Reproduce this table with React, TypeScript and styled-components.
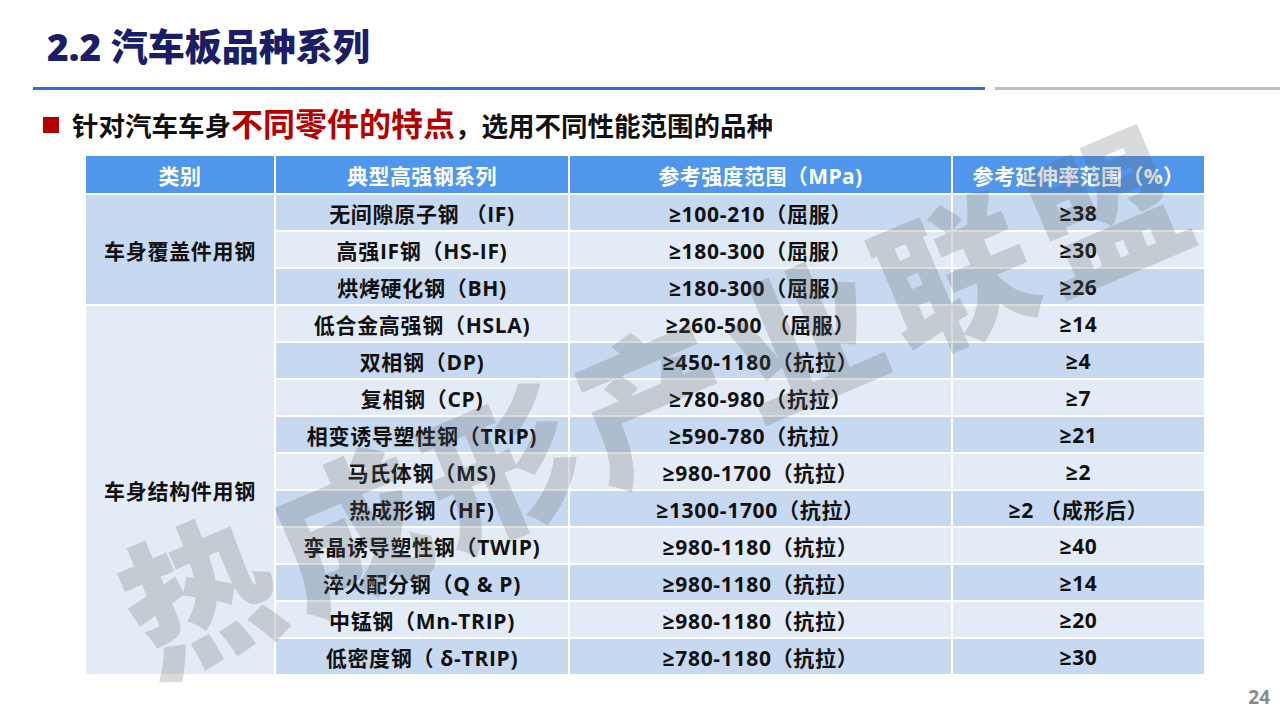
import React from "react";
import styled, { createGlobalStyle } from "styled-components";

type Row = { series: string; strength: string; elongation: string };
type Group = { name: string; tone: "dark" | "light"; rows: Row[] };

const groups: Group[] = [
  {
    name: "车身覆盖件用钢",
    tone: "dark",
    rows: [
      { series: "无间隙原子钢 （IF)", strength: "≥100-210（屈服）", elongation: "≥38" },
      { series: "高强IF钢（HS-IF)", strength: "≥180-300（屈服）", elongation: "≥30" },
      { series: "烘烤硬化钢（BH)", strength: "≥180-300（屈服）", elongation: "≥26" },
    ],
  },
  {
    name: "车身结构件用钢",
    tone: "light",
    rows: [
      { series: "低合金高强钢（HSLA)", strength: "≥260-500 （屈服）", elongation: "≥14" },
      { series: "双相钢（DP)", strength: "≥450-1180（抗拉）", elongation: "≥4" },
      { series: "复相钢（CP)", strength: "≥780-980（抗拉）", elongation: "≥7" },
      { series: "相变诱导塑性钢（TRIP)", strength: "≥590-780（抗拉）", elongation: "≥21" },
      { series: "马氏体钢（MS)", strength: "≥980-1700（抗拉）", elongation: "≥2" },
      { series: "热成形钢（HF)", strength: "≥1300-1700（抗拉）", elongation: "≥2 （成形后）" },
      { series: "孪晶诱导塑性钢（TWIP)", strength: "≥980-1180（抗拉）", elongation: "≥40" },
      { series: "淬火配分钢（Q & P)", strength: "≥980-1180（抗拉）", elongation: "≥14" },
      { series: "中锰钢（Mn-TRIP)", strength: "≥980-1180（抗拉）", elongation: "≥20" },
      { series: "低密度钢（ δ-TRIP)", strength: "≥780-1180（抗拉）", elongation: "≥30" },
    ],
  },
];

const colors = {
  navy: "#1b1e66",
  blueRule: "#2f6fd6",
  greyRule: "#b6bec6",
  red: "#b50000",
  header: "#4f96ec",
  dark: "#c6d9f0",
  light: "#e2ebf6",
};

const GlobalStyle = createGlobalStyle`
  html, body {
    margin: 0;
    padding: 0;
    background: #ffffff;
  }
  body {
    font-family: "Open Sans", "Noto Sans CJK SC", sans-serif;
  }
`;

const App = () => {
  let index = 0;
  return (
    <>
      <GlobalStyle />
      <Slide>
        <Title>2.2 汽车板品种系列</Title>
        <Rules>
          <BlueRule />
          <GreyRule />
        </Rules>
        <Bullet>
          <Square />
          <Lead>
            针对汽车车身<Highlight>不同零件的特点</Highlight>，选用不同性能范围的品种
          </Lead>
        </Bullet>
        <Table>
          <colgroup>
            <col style={{ width: 190 }} />
            <col style={{ width: 294 }} />
            <col style={{ width: 383 }} />
            <col />
          </colgroup>
          <thead>
            <tr>
              <Th>类别</Th>
              <Th>典型高强钢系列</Th>
              <Th>参考强度范围（MPa)</Th>
              <Th>参考延伸率范围（%）</Th>
            </tr>
          </thead>
          <tbody>
            {groups.map((group) =>
              group.rows.map((row, i) => {
                const tone = index++ % 2 === 0 ? "dark" : "light";
                return (
                  <tr key={row.series}>
                    {i === 0 && (
                      <Td $tone={group.tone} rowSpan={group.rows.length}>
                        {group.name}
                      </Td>
                    )}
                    <Td $tone={tone}>{row.series}</Td>
                    <Td $tone={tone}>{row.strength}</Td>
                    <Td $tone={tone}>{row.elongation}</Td>
                  </tr>
                );
              })
            )}
          </tbody>
        </Table>
        <PageNumber>24</PageNumber>
        <Watermark>热成形产业联盟</Watermark>
      </Slide>
    </>
  );
};

export default App;

const Slide = styled.div`
  position: relative;
  width: 1280px;
  height: 719px;
  overflow: hidden;
  background: #ffffff;
  display: flex;
  flex-direction: column;
`;
const Title = styled.h1`
  margin: 0;
  padding: 27px 0 0 47px;
  font-size: 37px;
  line-height: 40px;
  font-weight: 800;
  color: ${colors.navy};
`;
const Rules = styled.div`
  display: flex;
  gap: 10px;
  margin-top: 20px;
  padding-left: 33px;
`;
const BlueRule = styled.div`
  width: 952px;
  height: 3px;
  background: ${colors.blueRule};
`;
const GreyRule = styled.div`
  flex: 1;
  height: 3px;
  background: ${colors.greyRule};
`;
const Bullet = styled.div`
  display: flex;
  align-items: center;
  margin-top: 18px;
  padding-left: 43px;
  height: 34px;
`;
const Square = styled.span`
  width: 16px;
  height: 16px;
  background: ${colors.red};
  margin-right: 13px;
  flex-shrink: 0;
`;
const Lead = styled.span`
  font-size: 26.5px;
  line-height: 34px;
  font-weight: 700;
  color: #111111;
`;
const Highlight = styled.span`
  font-size: 32px;
  color: ${colors.red};
`;
const Table = styled.table`
  margin: 14px 0 0 84px;
  width: 1122px;
  border-collapse: collapse;
  table-layout: fixed;
`;
const Th = styled.th`
  height: 37px;
  padding: 0;
  background: ${colors.header};
  border: 2px solid #ffffff;
  border-top: 0;
  color: #ffffff;
  font-size: 21px;
  font-weight: 700;
  letter-spacing: 0.4px;
  text-align: center;
  white-space: nowrap;
`;
const Td = styled.td<{ $tone: "dark" | "light" }>`
  height: 35px;
  padding: 0;
  background: ${({ $tone }) => ($tone === "dark" ? colors.dark : colors.light)};
  border: 2px solid #ffffff;
  color: #111111;
  font-size: 21px;
  font-weight: 700;
  letter-spacing: 0.7px;
  text-align: center;
  white-space: nowrap;
`;
const PageNumber = styled.div`
  align-self: flex-end;
  margin: 11px 10px 0 0;
  font-size: 19px;
  line-height: 20px;
  font-weight: 700;
  color: #8a8a8a;
`;
const Watermark = styled.div`
  position: absolute;
  left: 650px;
  top: 396px;
  width: max-content;
  padding-left: 12px;
  transform: translate(-50%, -50%) rotate(-23deg);
  font-family: "Noto Sans CJK SC", sans-serif;
  font-size: 152px;
  line-height: 1.3;
  font-weight: 900;
  letter-spacing: 12px;
  white-space: nowrap;
  color: rgba(100, 100, 100, 0.24);
  pointer-events: none;
`;
